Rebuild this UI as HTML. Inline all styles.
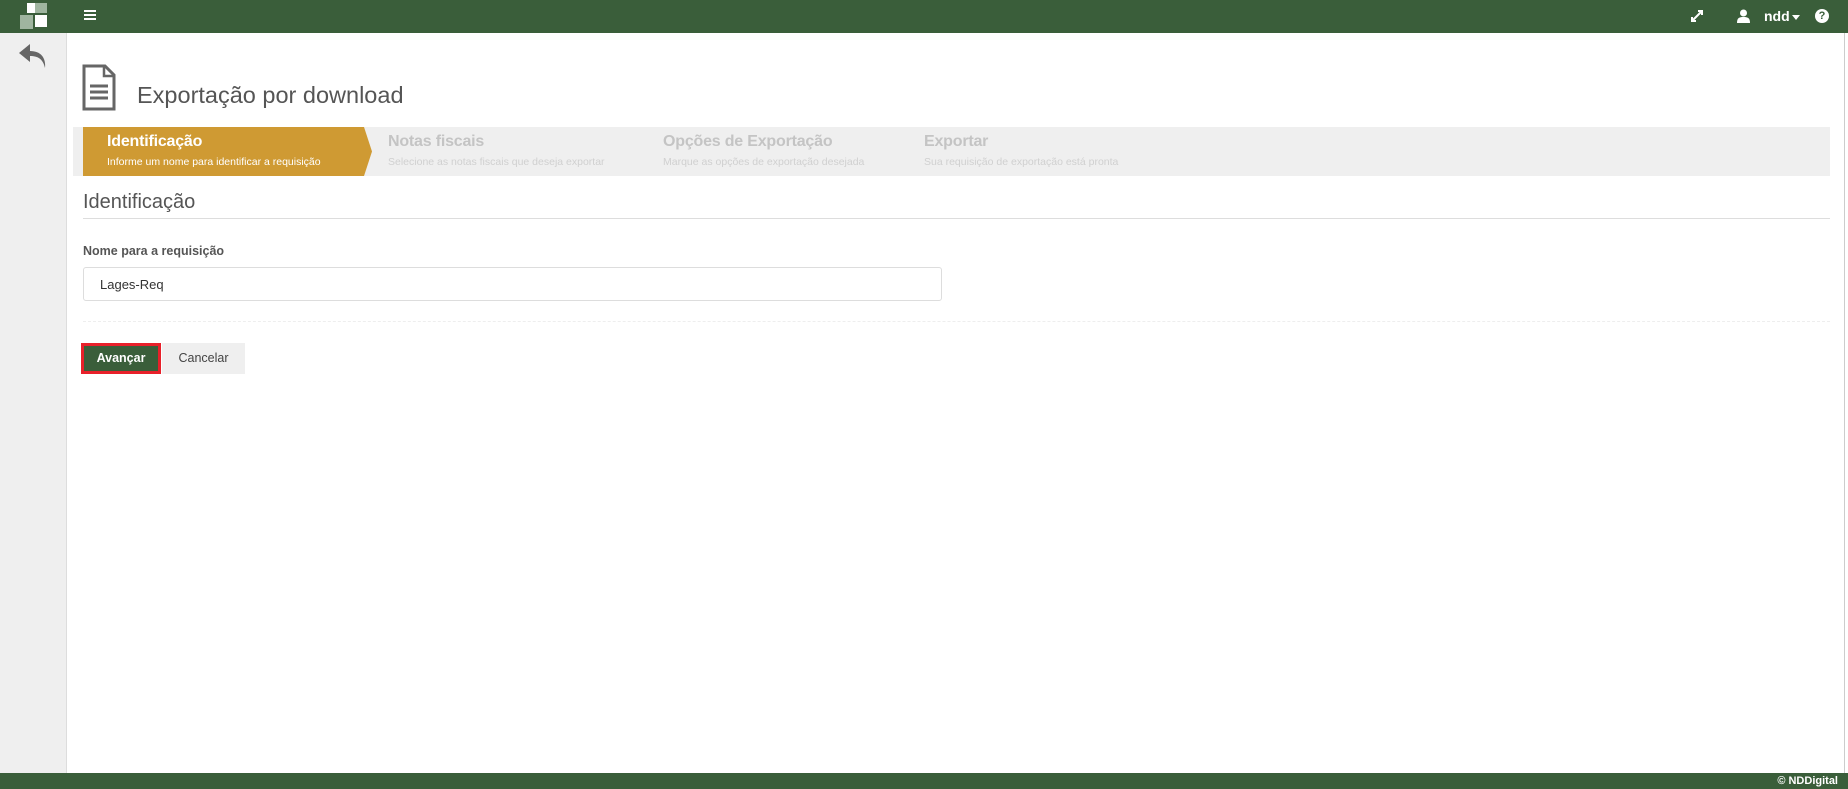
<!DOCTYPE html>
<html><head><meta charset="utf-8"><style>
*{margin:0;padding:0;box-sizing:border-box}
body{width:1848px;height:789px;overflow:hidden;background:#fff;font-family:"Liberation Sans",sans-serif;position:relative;color:#555}
.hdr{position:absolute;left:0;top:0;width:1848px;height:33px;background:#3a5e3a}
.side{position:absolute;left:0;top:33px;width:67px;height:740px;background:#efefef;border-right:1px solid #ddd}
.rb{position:absolute;left:1844px;top:33px;width:4px;height:740px;background:#fff;border-left:1px solid #ccc}
.foot{position:absolute;left:0;top:773px;width:1848px;height:16px;background:#3a5e3a;color:#fff;font-size:11px;font-weight:bold;text-align:right;padding-right:10px;line-height:16px}
.a{position:absolute}
.steps{position:absolute;left:73px;top:127px;width:1757px;height:49px;background:#efefef}
.st{position:absolute;top:6px;color:#c4c4c4}
.st b{display:block;font-size:16px;letter-spacing:-.2px}
.st span{display:block;font-size:10.5px;margin-top:5px;color:#d0d0d0}
</style></head><body>
<div class="hdr">
 <div class="a" style="left:27px;top:3px;width:12px;height:10px;background:#fff"></div>
 <div class="a" style="left:35px;top:3px;width:12px;height:10px;background:#9fb59f"></div>
 <div class="a" style="left:20px;top:15px;width:13px;height:14px;background:#9fb59f"></div>
 <div class="a" style="left:35px;top:15px;width:12px;height:12px;background:#fff"></div>
 <div class="a" style="left:84px;top:10px;width:12px;height:2px;background:#fff;box-shadow:0 4px 0 #fff,0 8px 0 #fff"></div>
 <svg class="a" style="left:1690px;top:9px" width="14" height="14" viewBox="0 0 14 14"><path d="M2 12L12 2M8 2h4v4M2 8v4h4" stroke="#fff" stroke-width="2" fill="none"/></svg>
 <svg class="a" style="left:1737px;top:9px" width="13" height="14" viewBox="0 0 13 14"><circle cx="6.5" cy="4" r="3.5" fill="#fff"/><path d="M0 14c0-5 2-6 6.5-6s6.5 1 6.5 6z" fill="#fff"/></svg>
 <div class="a" style="left:1764px;top:8px;color:#fff;font-size:14px;font-weight:bold">ndd</div>
 <div class="a" style="left:1792px;top:15px;border:4px solid transparent;border-top:5px solid #fff"></div>
 <div class="a" style="left:1815px;top:9px;width:14px;height:14px;border-radius:50%;background:#fff;color:#3a5e3a;font-size:11px;font-weight:bold;text-align:center;line-height:14px">?</div>
</div>
<div class="side">
 <svg class="a" style="left:18px;top:10px" width="30" height="26" viewBox="0 0 30 26"><path d="M12 1L1 10l11 9v-6c8 0 13 3 15 12 1-10-4-17-15-17z" fill="#666"/></svg>
</div>
<div class="rb"></div>
<svg class="a" style="left:82px;top:64px" width="34" height="47" viewBox="0 0 34 47"><path d="M2 2h21l9 9v34H2z" fill="none" stroke="#666" stroke-width="3"/><path d="M22 2v10h10" fill="none" stroke="#666" stroke-width="2.5"/><path d="M8 22h18M8 28h18M8 34h18" stroke="#666" stroke-width="3"/></svg>
<div class="a" style="left:137px;top:82px;font-size:23.5px;color:#555">Exportação por download</div>
<div class="steps">
 <svg class="a" style="left:10px;top:0" width="291" height="49"><path d="M0 0h281l8 24.5-8 24.5H0z" fill="#cf9a33"/></svg>
 <div class="st" style="left:34px;color:#fff"><b>Identificação</b><span style="color:#fff">Informe um nome para identificar a requisição</span></div>
 <div class="st" style="left:315px"><b>Notas fiscais</b><span>Selecione as notas fiscais que deseja exportar</span></div>
 <div class="st" style="left:590px"><b>Opções de Exportação</b><span>Marque as opções de exportação desejada</span></div>
 <div class="st" style="left:851px"><b>Exportar</b><span>Sua requisição de exportação está pronta</span></div>
</div>
<div class="a" style="left:83px;top:191px;font-size:20px;color:#555">Identificação</div>
<div class="a" style="left:83px;top:218px;width:1747px;height:1px;background:#ddd"></div>
<div class="a" style="left:83px;top:244px;font-size:12.5px;font-weight:bold;color:#555">Nome para a requisição</div>
<div class="a" style="left:83px;top:267px;width:859px;height:34px;border:1px solid #ddd;border-radius:3px;font-size:13px;color:#333;padding:9px 0 0 16px">Lages-Req</div>
<div class="a" style="left:83px;top:321px;width:1747px;border-top:1px dashed #eee"></div>
<div class="a" style="left:81px;top:343px;width:80px;height:31px;background:#e8202a;padding:3px"><div style="background:#3a5e3a;color:#fff;font-size:12.5px;font-weight:bold;height:25px;line-height:25px;text-align:center">Avançar</div></div>
<div class="a" style="left:162px;top:343px;width:83px;height:31px;background:#efefef;color:#444;font-size:12.5px;line-height:31px;text-align:center">Cancelar</div>
<div class="foot">© NDDigital</div>
</body></html>
